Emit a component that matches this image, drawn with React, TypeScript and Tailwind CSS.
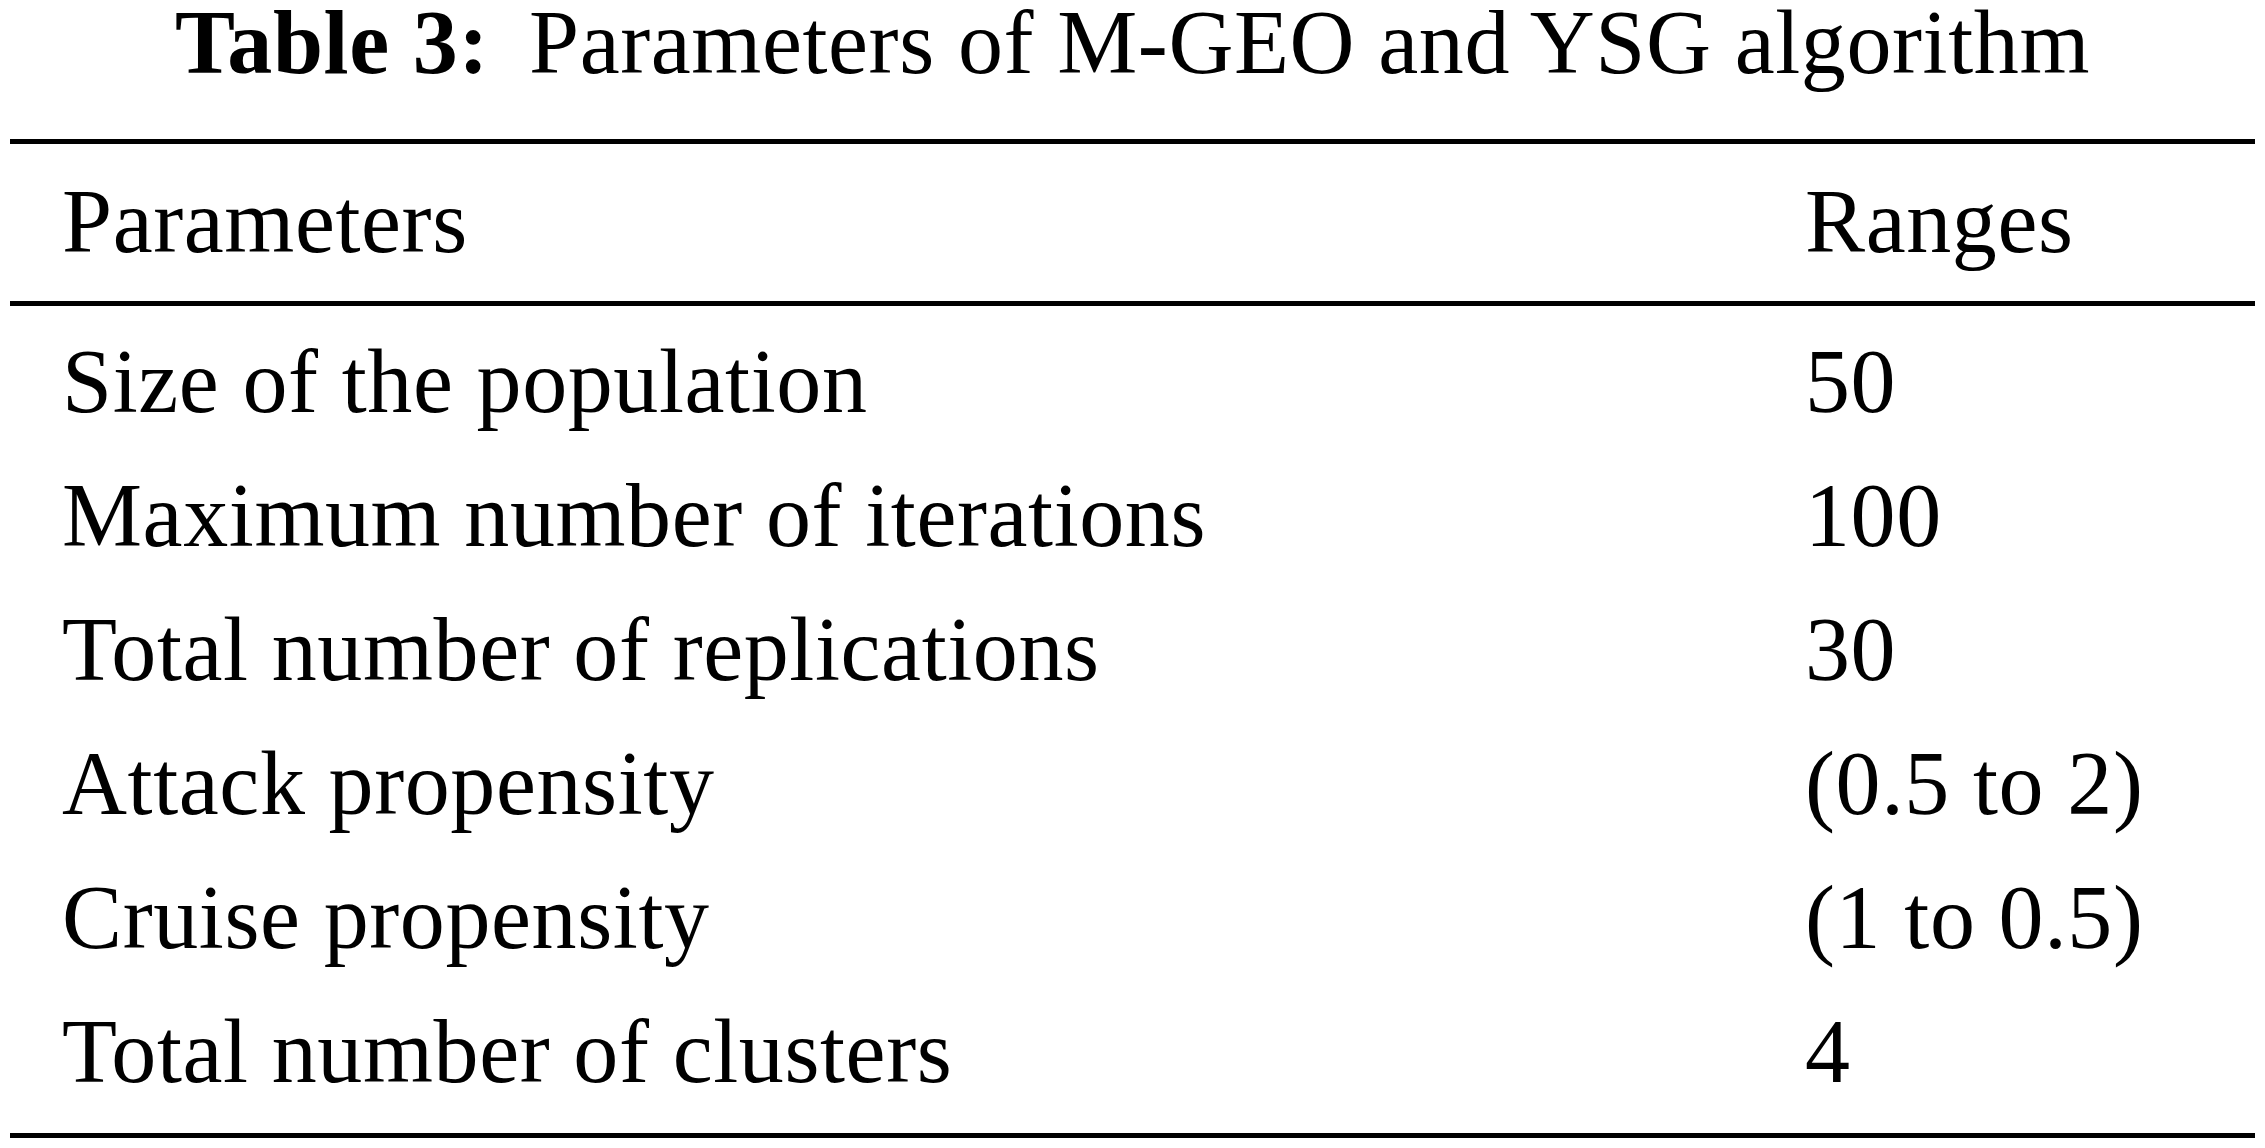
const rows = [
  { name: "Size of the population", range: "50" },
  { name: "Maximum number of iterations", range: "100" },
  { name: "Total number of replications", range: "30" },
  { name: "Attack propensity", range: "(0.5 to 2)" },
  { name: "Cruise propensity", range: "(1 to 0.5)" },
  { name: "Total number of clusters", range: "4" },
];

export default function App() {
  return (
    <div className="min-h-screen bg-white text-black font-['Liberation_Serif','Times_New_Roman',serif] text-[90px] tracking-[0.6px]">
      <div className="mx-[10px]">
        <h1 className="text-center leading-[86px] font-normal">
          <span className="font-bold">Table 3:</span>
          <span className="ml-[40px]">Parameters of M-GEO and YSG algorithm</span>
        </h1>

        <div className="mt-[53px] border-t-[5px] border-black" />
        <div className="grid grid-cols-[1795px_1fr] leading-[134px] pt-[11px] pb-[12px]">
          <div className="pl-[52px]">Parameters</div>
          <div>Ranges</div>
        </div>
        <div className="border-t-[5px] border-black" />

        <div className="pt-[9px] pb-[14px]">
          {rows.map((row) => (
            <div key={row.name} className="grid grid-cols-[1795px_1fr] leading-[134px]">
              <div className="pl-[52px]">{row.name}</div>
              <div>{row.range}</div>
            </div>
          ))}
        </div>
        <div className="border-t-[5px] border-black" />
      </div>
    </div>
  );
}
